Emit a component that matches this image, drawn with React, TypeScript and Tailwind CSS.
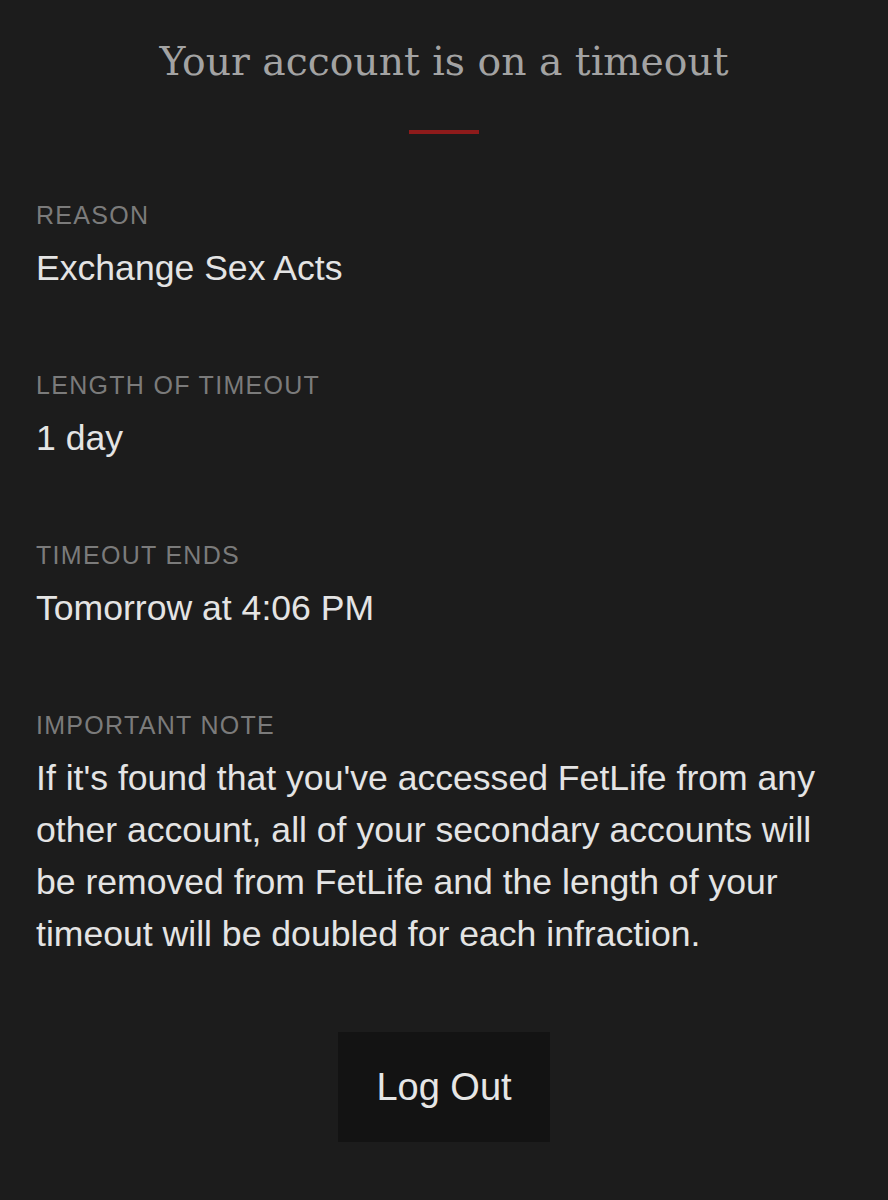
import React from "react";

const sans = { fontFamily: '"Liberation Sans", Arial, sans-serif' };

function Section({ label, children, last }: { label: string; children: React.ReactNode; last?: boolean }) {
  return (
    <div className={last ? "" : "mb-[76px]"}>
      <div className="text-[25px] leading-[30px] tracking-[1.3px] text-[#7b7b7b] uppercase">{label}</div>
      <div className="mt-[12px] text-[35.6px] leading-[52px] text-[#e4e4e4]">{children}</div>
    </div>
  );
}

export default function App() {
  return (
    <div className="min-h-[1200px] w-full bg-[#1c1c1c]" style={sans}>
      <div className="flex flex-col items-center pt-[35px]">
        <h1
          className="text-[39.3px] leading-[54px] text-[#a3a3a3]"
          style={{ fontFamily: '"DejaVu Serif", Georgia, serif' }}
        >
          Your account is on a timeout
        </h1>
        <div className="mt-[41px] h-[4px] w-[70px] bg-[#8e1b1b]" />
      </div>
      <div className="px-[36px] pt-[66px]">
        <Section label="Reason">Exchange Sex Acts</Section>
        <Section label="Length of timeout">1 day</Section>
        <Section label="Timeout ends">Tomorrow at 4:06 PM</Section>
        <Section label="Important note" last>
          If it's found that you've accessed FetLife from any other account, all of your secondary accounts will be
          removed from FetLife and the length of your timeout will be doubled for each infraction.
        </Section>
      </div>
      <div className="flex justify-center pt-[72px]">
        <button className="flex h-[110px] w-[212px] items-center justify-center bg-[#131313] text-[38px] text-[#e6e6e6]">
          Log Out
        </button>
      </div>
    </div>
  );
}
